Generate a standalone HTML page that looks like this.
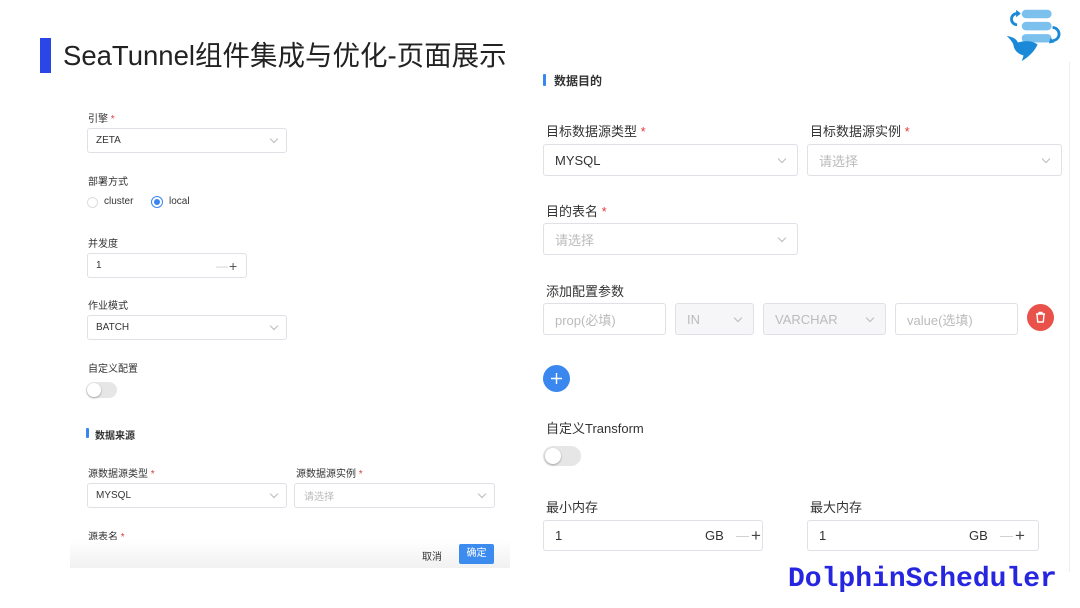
<!DOCTYPE html>
<html><head><meta charset="utf-8"><style>
*{margin:0;padding:0;box-sizing:border-box}
body{width:1080px;height:608px;background:#fff;position:relative;overflow:hidden;font-family:"Liberation Sans","Noto Sans CJK SC",sans-serif;color:#333}
.a{position:absolute;white-space:nowrap}
.box{position:absolute;border:1px solid #e0e0e6;border-radius:3px;background:#fff}
.box > span{position:absolute;top:0;bottom:0;display:flex;align-items:center;white-space:nowrap}
.s{font-size:10px;color:#333}
.m{font-size:13px;color:#333}
.req{color:#e03c3c}
.chev{position:absolute;width:6px;height:6px;border-right:1px solid #bbb;border-bottom:1px solid #bbb;transform:rotate(45deg)}
.ph{color:#bbb}
</style></head><body>
<div class="a" style="left:40px;top:38px;width:11px;height:35px;background:#2b46e6"></div>
<div class="a" style="left:63px;top:33px;font-size:27.5px;color:#222">SeaTunnel组件集成与优化-页面展示</div>

<!-- logo -->
<svg class="a" style="left:1003px;top:7px" width="58" height="56" viewBox="0 0 58 60">
<rect x="18" y="3" width="32" height="9" rx="4.5" fill="#7cc0ee"/>
<rect x="18" y="16" width="32" height="9" rx="4.5" fill="#7cc0ee"/>
<rect x="18" y="29" width="32" height="9" rx="4.5" fill="#7cc0ee"/>
<path d="M13 7 A6 6 0 0 0 13 19" stroke="#1a8ad8" stroke-width="3" fill="none"/>
<path d="M12 3 L17 7 L12 11Z" fill="#1a8ad8"/>
<path d="M51 22 A6 6 0 0 1 51 36" stroke="#1a8ad8" stroke-width="3" fill="none"/>
<path d="M49 33 L53 38 L47 39Z" fill="#1a8ad8"/>
<path d="M2 31 C6 35 8 38 9 40 C10 48 16 51 20 52 L18 58 C26 53 32 47 35 40 C30 37 24 35 14 38 C12 34 8 32 2 31Z" fill="#1a8ad8"/>
</svg>
<div class="a" style="left:1069px;top:62px;width:1px;height:510px;background:#eee"></div>

<!-- left panel -->
<div class="a s" style="left:88px;top:110px">引擎 <span class="req">*</span></div>
<div class="box" style="left:87px;top:128px;width:200px;height:25px"><span class="s" style="left:8px">ZETA</span><i class="chev" style="left:183px;top:7px"></i></div>
<div class="a s" style="left:88px;top:173px">部署方式</div>
<div class="a" style="left:87px;top:197px;width:11px;height:11px;border:1px solid #ddd;border-radius:50%"></div>
<div class="a s" style="left:104px;top:196px">cluster</div>
<div class="a" style="left:151px;top:196px;width:12px;height:12px;border:1px solid #3a86f0;border-radius:50%"><div style="margin:2px;width:6px;height:6px;border-radius:50%;background:#3a86f0"></div></div>
<div class="a s" style="left:169px;top:196px">local</div>
<div class="a s" style="left:88px;top:235px">并发度</div>
<div class="box" style="left:87px;top:253px;width:160px;height:25px"><span class="s" style="left:8px">1</span><span style="left:128px;color:#ccc;font-size:12px">—</span><span style="left:141px;font-size:14px;color:#555">+</span></div>
<div class="a s" style="left:88px;top:297px">作业模式</div>
<div class="box" style="left:87px;top:315px;width:200px;height:25px"><span class="s" style="left:8px">BATCH</span><i class="chev" style="left:183px;top:7px"></i></div>
<div class="a s" style="left:88px;top:360px">自定义配置</div>
<div class="a" style="left:86px;top:382px;width:31px;height:16px;border-radius:8px;background:#e6e6e6"><div style="margin:1px;width:14px;height:14px;border-radius:50%;background:#fff;box-shadow:0 1px 2px rgba(0,0,0,.3)"></div></div>
<div class="a" style="left:86px;top:428px;width:3px;height:10px;background:#3a86f0;border-radius:1px"></div>
<div class="a s" style="left:95px;top:427px;font-weight:bold">数据来源</div>
<div class="a s" style="left:88px;top:465px">源数据源类型 <span class="req">*</span></div>
<div class="a s" style="left:296px;top:465px">源数据源实例 <span class="req">*</span></div>
<div class="box" style="left:87px;top:483px;width:200px;height:25px"><span class="s" style="left:8px">MYSQL</span><i class="chev" style="left:183px;top:7px"></i></div>
<div class="box" style="left:294px;top:483px;width:201px;height:25px"><span class="s ph" style="left:9px">请选择</span><i class="chev" style="left:184px;top:7px"></i></div>
<div class="a s" style="left:88px;top:528px">源表名 <span class="req">*</span></div>
<div class="a" style="left:70px;top:540px;width:440px;height:28px;background:linear-gradient(#fff,#f1f1f1)"></div>
<div class="a s" style="left:422px;top:548px">取消</div>
<div class="a" style="left:459px;top:544px;width:35px;height:20px;background:#3c8cf0;border-radius:2px;color:#fff;font-size:10px;text-align:center;line-height:20px">确定</div>

<!-- right panel -->
<div class="a" style="left:543px;top:74px;width:3px;height:12px;background:#3a86f0;border-radius:1px"></div>
<div class="a" style="left:554px;top:72px;font-size:12px;font-weight:bold;color:#333">数据目的</div>
<div class="a m" style="left:546px;top:121px">目标数据源类型 <span class="req">*</span></div>
<div class="a m" style="left:810px;top:121px">目标数据源实例 <span class="req">*</span></div>
<div class="box" style="left:543px;top:144px;width:255px;height:32px"><span class="m" style="left:11px">MYSQL</span><i class="chev" style="left:235px;top:11px"></i></div>
<div class="box" style="left:807px;top:144px;width:255px;height:32px"><span class="m ph" style="left:11px">请选择</span><i class="chev" style="left:235px;top:11px"></i></div>
<div class="a m" style="left:546px;top:201px">目的表名 <span class="req">*</span></div>
<div class="box" style="left:543px;top:223px;width:255px;height:32px"><span class="m ph" style="left:11px">请选择</span><i class="chev" style="left:235px;top:11px"></i></div>
<div class="a m" style="left:546px;top:281px">添加配置参数</div>
<div class="box" style="left:543px;top:303px;width:123px;height:32px"><span class="m ph" style="left:11px">prop(必填)</span></div>
<div class="box" style="left:675px;top:303px;width:79px;height:32px;background:#f6f6f8"><span class="m ph" style="left:11px">IN</span><i class="chev" style="left:59px;top:11px"></i></div>
<div class="box" style="left:763px;top:303px;width:123px;height:32px;background:#f6f6f8"><span class="m ph" style="left:11px">VARCHAR</span><i class="chev" style="left:103px;top:11px"></i></div>
<div class="box" style="left:895px;top:303px;width:123px;height:32px"><span class="m ph" style="left:11px">value(选填)</span></div>
<svg class="a" style="left:1027px;top:304px" width="27" height="27" viewBox="0 0 27 27"><circle cx="13.5" cy="13.5" r="13.5" fill="#e8524a"/><path d="M9 10h9M12 10V8.5h3V10M10 10l.7 8h5.6l.7-8" stroke="#fff" stroke-width="1.4" fill="none" stroke-linejoin="round"/></svg>
<svg class="a" style="left:543px;top:365px" width="27" height="27" viewBox="0 0 27 27"><circle cx="13.5" cy="13.5" r="13.5" fill="#3b87f0"/><path d="M13.5 8v11M8 13.5h11" stroke="#fff" stroke-width="1.4"/></svg>
<div class="a m" style="left:546px;top:418px">自定义Transform</div>
<div class="a" style="left:543px;top:446px;width:38px;height:20px;border-radius:10px;background:#e6e6e6"><div style="margin:2px;width:16px;height:16px;border-radius:50%;background:#fff;box-shadow:0 1px 2px rgba(0,0,0,.3)"></div></div>
<div class="a m" style="left:546px;top:497px">最小内存</div>
<div class="a m" style="left:810px;top:497px">最大内存</div>
<div class="box" style="left:543px;top:520px;width:220px;height:31px"><span class="m" style="left:11px">1</span><span class="m" style="left:161px">GB</span><span style="left:192px;color:#ccc;font-size:13px">—</span><span style="left:207px;font-size:17px;color:#444">+</span></div>
<div class="box" style="left:807px;top:520px;width:232px;height:31px"><span class="m" style="left:11px">1</span><span class="m" style="left:161px">GB</span><span style="left:192px;color:#ccc;font-size:13px">—</span><span style="left:207px;font-size:17px;color:#444">+</span></div>
<div class="a" style="left:788px;top:564px;font-family:'Liberation Mono',monospace;font-weight:bold;font-size:28px;color:#2626e0;letter-spacing:0px">DolphinScheduler</div>
</body></html>
